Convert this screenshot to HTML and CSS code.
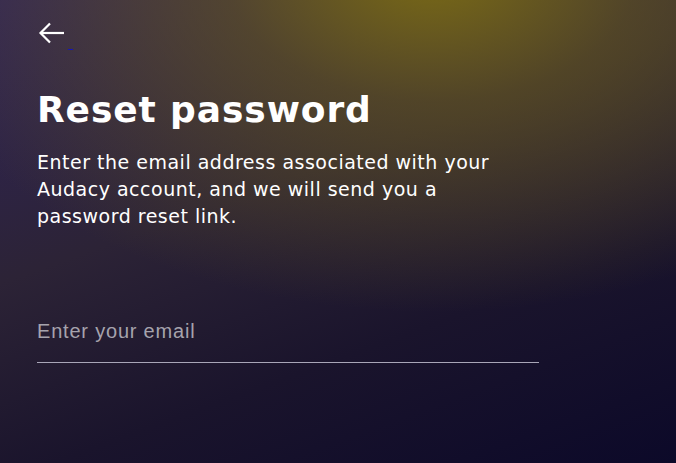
FILE: index.html
```html
<!DOCTYPE html>
<html lang="en">

<head>
    <meta charset="UTF-8">
    <meta name="viewport" content="width=device-width, initial-scale=1.0">
    <title>Reset password</title>
    <link rel="stylesheet" href="styles.css">
</head>

<body>
    <div class="page">
        <a class="back-link" href="#">
            <svg width="26" height="22" viewBox="0 0 26 22" fill="none" stroke="#fff" stroke-width="2.2">
                <path d="M26 11H3" />
                <path d="M12 1.5L2.5 11L12 20.5" />
            </svg>
            <span class="back-underline"></span>
        </a>
        <div class="content">
            <h1>Reset password</h1>
            <p class="intro">Enter the email address associated with your Audacy account, and we will send you a password reset link.</p>
            <form class="reset-form" onsubmit="return false">
                <input type="email" class="email-input" placeholder="Enter your email">
            </form>
        </div>
    </div>
</body>

</html>
```

FILE: styles.css
```css
/* Page background with the gold glow at the top */
html, body {
    margin: 0;
    height: 100%;
}

body {
    background:
        radial-gradient(ellipse 540px 340px at 64% -6%, rgba(126, 110, 18, 0.95) 0%, rgba(105, 90, 28, 0.6) 38%, rgba(60, 45, 40, 0) 100%),
        linear-gradient(160deg, #30245a 0%, #2c2336 40%, #1a142c 68%, #0c0929 100%);
    color: #fff;
    font-family: "DejaVu Sans", sans-serif;
}

.page {
    padding: 22px 37px;
}

/* Back arrow link */
.back-link {
    display: flex;
    align-items: flex-start;
    width: 36px;
    height: 30px;
}

.back-link svg {
    margin-left: 1px;
}

.back-underline {
    display: block;
    width: 5px;
    height: 1px;
    margin-top: 27px;
    margin-left: 4px;
    background: #1616b8;
}

/* Title and text */
.content {
    max-width: 502px;
}

h1 {
    margin: 36px 0 0;
    font-size: 36px;
    font-weight: 700;
    letter-spacing: 0.9px;
    line-height: 44px;
}

.intro {
    max-width: 470px;
    margin: 17px 0 0;
    font-size: 19px;
    line-height: 27px;
    letter-spacing: 0.5px;
}

/* Email field */
.reset-form {
    margin-top: 90px;
}

.email-input {
    width: 100%;
    box-sizing: border-box;
    padding: 0 0 19px;
    border: none;
    border-bottom: 1px solid #a9a6b8;
    background: transparent;
    color: #fff;
    font-family: "Liberation Sans", Arial, sans-serif;
    font-size: 20px;
    letter-spacing: 0.8px;
    outline: none;
}

.email-input::placeholder {
    color: #a6a3ad;
}
```
